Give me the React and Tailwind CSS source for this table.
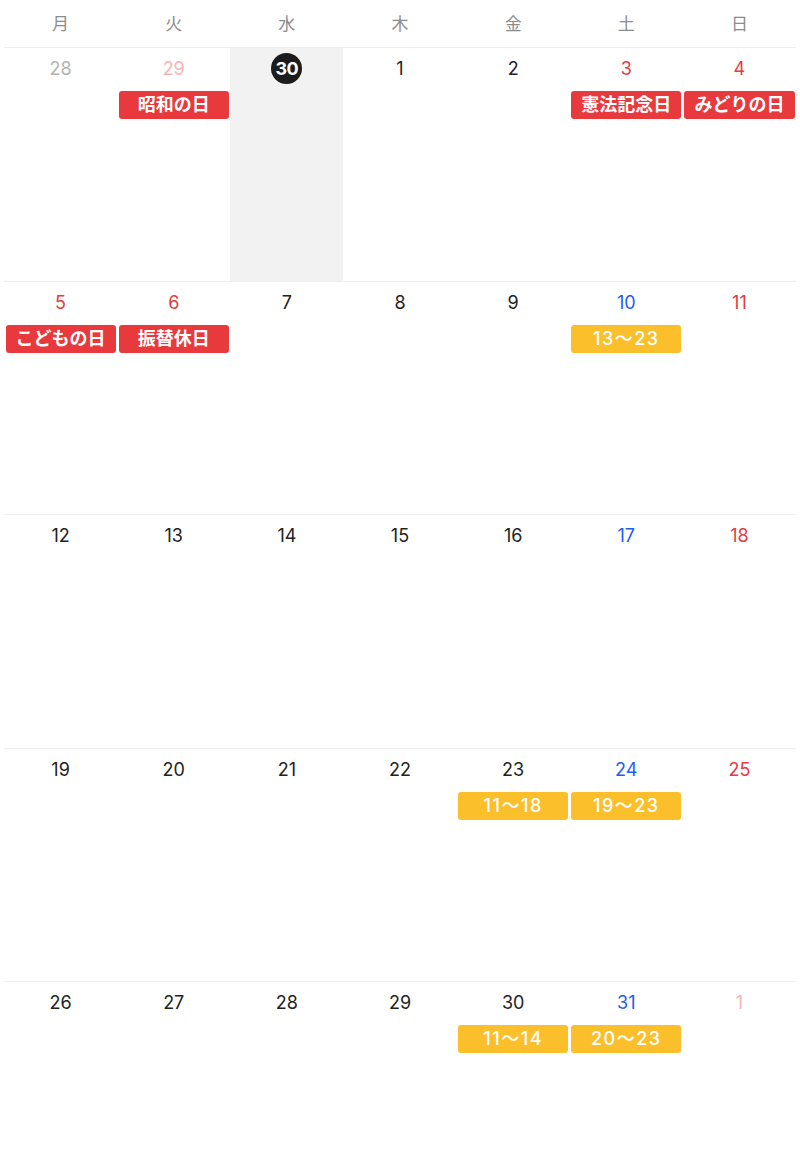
import React from 'react';

const WEEKDAYS = ['月', '火', '水', '木', '金', '土', '日'];

// tone: muted | mutedRed | red | blue | normal
const WEEKS = [
    [
        { d: 28, tone: 'muted' },
        { d: 29, tone: 'mutedRed', events: [{ label: '昭和の日', kind: 'holiday' }] },
        { d: 30, today: true },
        { d: 1 },
        { d: 2 },
        { d: 3, tone: 'red', events: [{ label: '憲法記念日', kind: 'holiday' }] },
        { d: 4, tone: 'red', events: [{ label: 'みどりの日', kind: 'holiday' }] },
    ],
    [
        { d: 5, tone: 'red', events: [{ label: 'こどもの日', kind: 'holiday' }] },
        { d: 6, tone: 'red', events: [{ label: '振替休日', kind: 'holiday' }] },
        { d: 7 },
        { d: 8 },
        { d: 9 },
        { d: 10, tone: 'blue', events: [{ label: '13〜23', kind: 'shift' }] },
        { d: 11, tone: 'red' },
    ],
    [
        { d: 12 },
        { d: 13 },
        { d: 14 },
        { d: 15 },
        { d: 16 },
        { d: 17, tone: 'blue' },
        { d: 18, tone: 'red' },
    ],
    [
        { d: 19 },
        { d: 20 },
        { d: 21 },
        { d: 22 },
        { d: 23, events: [{ label: '11〜18', kind: 'shift' }] },
        { d: 24, tone: 'blue', events: [{ label: '19〜23', kind: 'shift' }] },
        { d: 25, tone: 'red' },
    ],
    [
        { d: 26 },
        { d: 27 },
        { d: 28 },
        { d: 29 },
        { d: 30, events: [{ label: '11〜14', kind: 'shift' }] },
        { d: 31, tone: 'blue', events: [{ label: '20〜23', kind: 'shift' }] },
        { d: 1, tone: 'mutedRed' },
    ],
];

const toneClass = {
    normal: 'text-[#222222]',
    muted: 'text-[#b3b3b3]',
    mutedRed: 'text-[#f7b3b7]',
    red: 'text-[#e8393d]',
    blue: 'text-[#1f5cf5]',
};

const DayCell = ({ day }) => {
    const tone = day.tone || 'normal';
    return (
        <div className={`flex flex-col items-center px-[1.5px] ${day.today ? 'bg-[#f2f2f2]' : ''}`}>
            {/* Date number */}
            <div className="mt-[5px] h-[31px] flex items-center justify-center">
                {day.today ? (
                    <span className="w-[31px] h-[31px] rounded-full bg-[#1c1c1c] text-white font-bold text-[18px] flex items-center justify-center tracking-[-0.5px]">
                        {day.d}
                    </span>
                ) : (
                    <span className={`text-[18px] ${toneClass[tone]}`}>{day.d}</span>
                )}
            </div>

            {/* Events */}
            <div className="mt-[7px] w-full flex flex-col gap-1">
                {day.events?.map((ev, i) => (
                    <div
                        key={i}
                        className={`w-full h-[28px] rounded-[3px] flex items-center justify-center text-white text-[18px] leading-none whitespace-nowrap ${ev.kind === 'holiday' ? 'bg-[#e8393d] font-bold' : 'bg-[#fbbf2c] tracking-[1.5px] font-medium'}`}
                    >
                        {ev.label}
                    </div>
                ))}
            </div>
        </div>
    );
};

const App = () => {
    return (
        <div
            className="w-[800px] h-[1155px] overflow-hidden bg-white px-1"
            style={{ fontFamily: '"Inter", "Noto Sans CJK JP", sans-serif' }}
        >
            {/* Weekday header */}
            <div className="grid grid-cols-7 h-[48px] pt-[3px] border-b border-[#efefef]">
                {WEEKDAYS.map((w) => (
                    <div key={w} className="flex items-center justify-center text-[17px] text-[#8c8c8c]">
                        {w}
                    </div>
                ))}
            </div>

            {/* Weeks */}
            {WEEKS.map((week, wi) => (
                <div key={wi} className="grid grid-cols-7 h-[233.5px] border-b border-[#efefef]">
                    {week.map((day, di) => (
                        <DayCell key={di} day={day} />
                    ))}
                </div>
            ))}
        </div>
    );
};

export default App;
